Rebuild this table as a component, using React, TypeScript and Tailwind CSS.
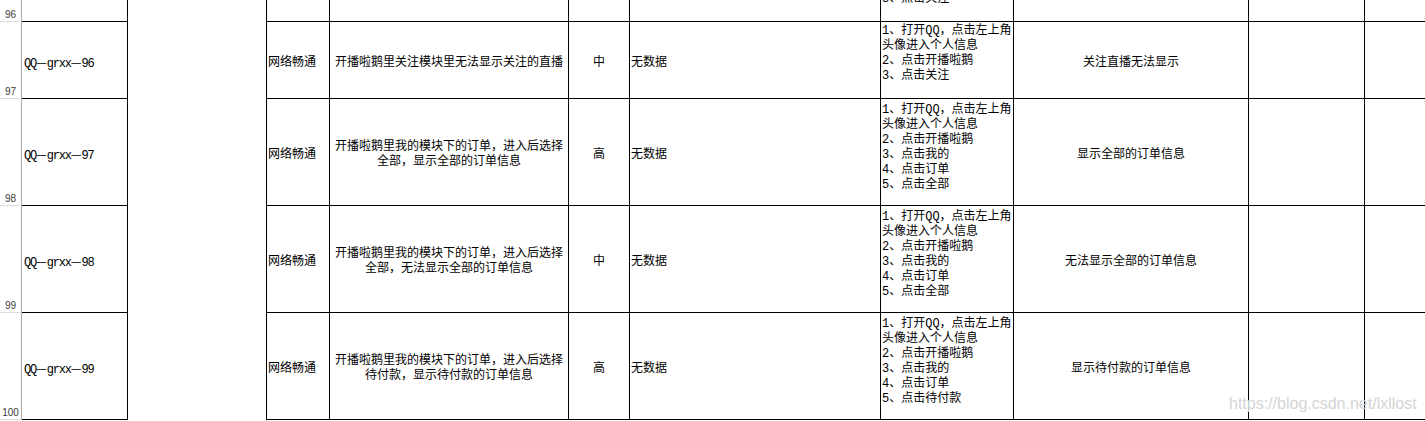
const stepsFollow = ["1、打开QQ，点击左上角", "头像进入个人信息", "2、点击开播啦鹅", "3、点击关注"];
const stepsOrder = (last: string) => [
  "1、打开QQ，点击左上角",
  "头像进入个人信息",
  "2、点击开播啦鹅",
  "3、点击我的",
  "4、点击订单",
  last,
];

// first row is scrolled almost out of view; only the tail of its steps shows
const rows = [
  {
    no: "96",
    id: "",
    h: "h-[77px]",
    pt: "pt-[2px]",
    title: [] as string[],
    level: "",
    steps: stepsFollow,
    result: "",
  },
  {
    no: "97",
    id: "96",
    h: "h-[77px]",
    pt: "pt-[2px]",
    title: ["开播啦鹅里关注模块里无法显示关注的直播"],
    level: "中",
    steps: stepsFollow,
    result: "关注直播无法显示",
  },
  {
    no: "98",
    id: "97",
    h: "h-[107px]",
    pt: "pt-[4px]",
    title: ["开播啦鹅里我的模块下的订单，进入后选择", "全部，显示全部的订单信息"],
    level: "高",
    steps: stepsOrder("5、点击全部"),
    result: "显示全部的订单信息",
  },
  {
    no: "99",
    id: "98",
    h: "h-[107px]",
    pt: "pt-[4px]",
    title: ["开播啦鹅里我的模块下的订单，进入后选择", "全部，无法显示全部的订单信息"],
    level: "中",
    steps: stepsOrder("5、点击全部"),
    result: "无法显示全部的订单信息",
  },
  {
    no: "100",
    id: "99",
    h: "h-[107px]",
    pt: "pt-[4px]",
    title: ["开播啦鹅里我的模块下的订单，进入后选择", "待付款，显示待付款的订单信息"],
    level: "高",
    steps: stepsOrder("5、点击待付款"),
    result: "显示待付款的订单信息",
  },
];

function CaseId({ n }: { n: string }) {
  if (!n) return null;
  return (
    <span className="tracking-[-1.2px]">
      QQ<span className="tracking-normal font-['Noto_Sans_CJK_SC',sans-serif]">—</span>grxx
      <span className="tracking-normal font-['Noto_Sans_CJK_SC',sans-serif]">—</span>
      {n}
    </span>
  );
}

export default function App() {
  return (
    <div className="relative h-[421px] w-[1425px] overflow-hidden bg-white text-[12px] leading-[15px] text-black font-['Liberation_Mono','Noto_Sans_CJK_SC',monospace]">
      <div className="-mt-[55px] flex">
        {/* row numbers + case id */}
        <div className="flex shrink-0 flex-col">
          {rows.map((r) => (
            <div key={r.no} className={`flex ${r.h}`}>
              <div className="flex w-[22px] shrink-0 items-end justify-center border-r border-b border-r-[#a8a8a8] border-b-[#dcdcdc] text-[10px] leading-[12px] text-[#3c3c3c] font-['Liberation_Sans',sans-serif]">
                {r.no}
              </div>
              <div className="flex w-[106px] shrink-0 items-center border-r border-b border-black pl-[2px] pt-[5px] whitespace-nowrap">
                <CaseId n={r.id} />
              </div>
            </div>
          ))}
        </div>

        {/* merged empty column */}
        <div className="w-[139px] shrink-0 border-r border-black" />

        {/* the rest of the sheet */}
        <div className="flex shrink-0 flex-col">
          {rows.map((r) => (
            <div key={r.no} className={`flex ${r.h}`}>
              <div className="flex w-[63px] shrink-0 items-center border-r border-b border-black pl-[1px] pt-[6px] whitespace-nowrap">
                {r.title.length > 0 && "网络畅通"}
              </div>
              <div className="flex w-[239px] shrink-0 flex-col items-center justify-center border-r border-b border-black pt-[6px] text-center whitespace-nowrap">
                {r.title.map((t) => (
                  <span key={t}>{t}</span>
                ))}
              </div>
              <div className="flex w-[61px] shrink-0 items-center justify-center border-r border-b border-black pt-[6px]">
                {r.level}
              </div>
              <div className="flex w-[251px] shrink-0 items-center border-r border-b border-black pl-[1px] pt-[6px]">
                {r.title.length > 0 && "无数据"}
              </div>
              <div className={`flex w-[133px] shrink-0 flex-col border-r border-b border-black pl-[1px] ${r.pt} whitespace-nowrap`}>
                {r.steps.map((s) => (
                  <span key={s}>{s}</span>
                ))}
              </div>
              <div className="flex w-[235px] shrink-0 items-center justify-center border-r border-b border-black pt-[6px]">
                {r.result}
              </div>
              <div className="w-[116px] shrink-0 border-r border-b border-black" />
              <div className="w-[116px] shrink-0 border-r border-b border-black" />
            </div>
          ))}
        </div>
      </div>

      {/* blog watermark */}
      <div className="pointer-events-none absolute left-[1229px] top-[396px] whitespace-nowrap text-[16px] leading-[16px] text-[#d4d4d4] font-['Liberation_Sans',sans-serif]">
        https://blog.csdn.net/lxllost
      </div>
    </div>
  );
}
